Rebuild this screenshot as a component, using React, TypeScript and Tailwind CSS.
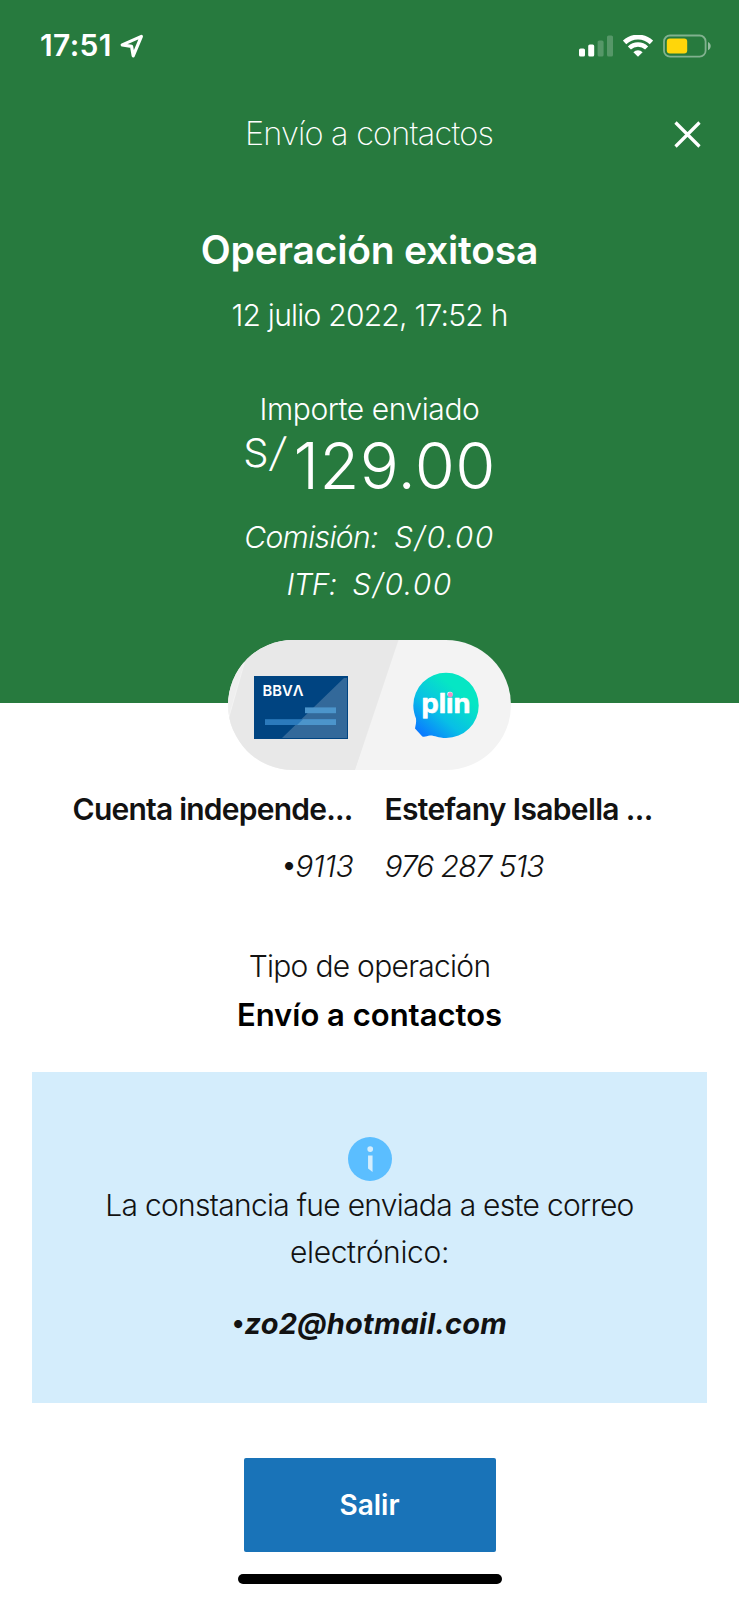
function StatusBar() {
  return (
    <div className="flex h-[91px] items-center justify-between pl-[40px] pr-[28px]">
      <div className="flex items-center gap-[8px]">
        <span className="text-[30px] font-semibold tracking-[0.35px]">17:51</span>
        <svg className="size-6" viewBox="0 0 24 24" fill="none" stroke="currentColor" strokeWidth="3.2" strokeLinejoin="round">
          <path d="M21.4 2.4L2.2 10.9L11.6 12.4L13.2 21.8Z" />
        </svg>
      </div>
      <div className="flex items-center">
        <svg className="h-[22px] w-[34px]" viewBox="0 0 34 22" fill="currentColor">
          <rect x="0" y="13.5" width="6" height="8" rx="1.6" />
          <rect x="9.2" y="9.5" width="6" height="12" rx="1.6" />
          <rect x="18.6" y="5.5" width="6" height="16" rx="1.6" opacity="0.22" />
          <rect x="28" y="0.5" width="6" height="21" rx="1.6" opacity="0.22" />
        </svg>
        <svg className="ml-[10px] h-[22px] w-[30px]" viewBox="0 0 30 22" fill="none" stroke="currentColor">
          <path d="M1.6 7.4A19.4 19.4 0 0 1 28.4 7.4" strokeWidth="4.8" />
          <path d="M6.4 13A12.4 12.4 0 0 1 23.6 13" strokeWidth="4.4" />
          <path d="M15 21.8L10.4 17.2A6.6 6.6 0 0 1 19.6 17.2Z" fill="currentColor" stroke="none" />
        </svg>
        <svg className="ml-[10px] h-6 w-12" viewBox="0 0 48 24" fill="none">
          <rect x="1" y="1.5" width="41.6" height="21.2" rx="6" stroke="#fff" strokeOpacity="0.42" strokeWidth="1.8" />
          <rect x="3.8" y="4.4" width="20.4" height="15.2" rx="3" fill="#ffd60a" />
          <path d="M45 8C48.6 9.4 48.6 14.8 45 16.2Z" fill="#fff" fillOpacity="0.5" />
        </svg>
      </div>
    </div>
  );
}

function TransferPill() {
  return (
    <svg className="relative mx-auto -mt-[63px] block h-[130px] w-[283px]" viewBox="0 0 283 130">
      <defs>
        <clipPath id="pill">
          <rect width="283" height="130" rx="65" />
        </clipPath>
        <linearGradient id="plin" x1="0.1" y1="0.9" x2="0.65" y2="0.25">
          <stop offset="0" stopColor="#0a7cff" />
          <stop offset="0.45" stopColor="#08bfe6" />
          <stop offset="1" stopColor="#06e6c4" />
        </linearGradient>
      </defs>
      <g clipPath="url(#pill)">
        <rect width="283" height="130" fill="#f3f3f3" />
        <path d="M19 15L28 0H170.5L127 130H28L0 82Z" fill="#e8e8e8" />
        <path d="M0 20H17L0 78Z" fill="#efefef" />
      </g>
      <g>
        <rect x="26" y="36" width="94" height="63" fill="#004481" />
        <path d="M116 38H119V98H54Z" fill="#fff" fillOpacity="0.2" />
        <rect x="77" y="67.4" width="31" height="5.8" fill="#4c95cb" />
        <rect x="37" y="79.2" width="71" height="5.8" fill="#2b7abc" />
        <path d="M75 79.2H108V85H69Z" fill="#4c95cb" />
        <text x="34.5" y="56" fill="#fff" fontFamily="Inter" fontSize="15" fontWeight="600" textLength="41" lengthAdjust="spacingAndGlyphs">
          BBV&Lambda;
        </text>
      </g>
      <g>
        <path
          d="M218 32.7A32.7 32.7 0 1 1 218 98.1C210 98.1 207 95.5 202 95.6C199 95.7 197 97.5 194.3 96.5L187 88.5C187.6 85 188.5 82.5 188 78.5C186.5 74.5 185.3 70 185.3 65.4A32.7 32.7 0 0 1 218 32.7Z"
          fill="url(#plin)"
        />
        <text x="193.5" y="73" fill="#fff" stroke="#fff" strokeWidth="0.6" strokeLinejoin="round" fontFamily="Inter" fontSize="27" fontWeight="700" textLength="49" lengthAdjust="spacingAndGlyphs">
          plin
        </text>
        <circle cx="222.3" cy="54.8" r="2.5" fill="#e992c8" />
      </g>
    </svg>
  );
}

export default function App() {
  return (
    <div className="h-[1600px] w-[739px] overflow-hidden bg-white font-['Inter',sans-serif] text-[30px] text-[#121212]">
      <header className="h-[703px] bg-[#277a3e] text-center font-light text-white">
        <StatusBar />
        <div className="grid h-[87px] grid-cols-[80px_1fr_80px] items-center">
          <span />
          <h1 className="-ml-px text-[32.5px] font-extralight tracking-[-0.8px]">Envío a contactos</h1>
          <svg className="ml-[15px] size-[27px]" viewBox="0 0 27 27" stroke="currentColor" strokeWidth="3.2" strokeLinecap="butt">
            <path d="M1.5 1.5L25.5 25.5M25.5 1.5L1.5 25.5" />
          </svg>
        </div>
        <h2 className="mt-12 text-[39px] leading-[48px] font-semibold tracking-[-0.2px]">Operación exitosa</h2>
        <p className="mt-[18px] leading-[46px] tracking-[-0.75px]">12 julio 2022, 17:52 h</p>
        <p className="mt-12 leading-[46px] tracking-[-0.43px]">Importe enviado</p>
        <div className="flex h-[68px] items-start justify-center gap-[7px]">
          <span className="text-[40px] leading-[42px] tracking-[2px]">
            S<span className="italic">/</span>
          </span>
          <span className="text-[65px] leading-[68px] tracking-[0.4px]">129.00</span>
        </div>
        <div className="mt-[14px] flex justify-center gap-[16px] leading-[47px] italic">
          <span className="tracking-[-0.6px]">Comisión:</span>
          <span className="tracking-[1.5px]">S/0.00</span>
        </div>
        <div className="flex justify-center gap-[16px] leading-[47px] italic">
          <span className="tracking-[-0.8px]">ITF:</span>
          <span className="tracking-[1.4px]">S/0.00</span>
        </div>
      </header>

      <TransferPill />

      <section className="mt-[19px] grid grid-cols-2 gap-x-[34px] gap-y-[17px] px-[31px] leading-10">
        <p className="text-right font-semibold tracking-[-0.78px]">Cuenta independe...</p>
        <p className="-ml-[2px] font-semibold tracking-[-0.65px]">Estefany Isabella ...</p>
        <p className="-mr-px flex items-center justify-end font-light tracking-[-0.4px] italic">
          <span className="mb-[2px] text-[26px] leading-8 font-semibold not-italic">•</span>
          9113
        </p>
        <p className="-ml-[2px] font-light tracking-[-1px] italic">976 287 513</p>
      </section>

      <section className="mt-[57px] text-center">
        <p className="leading-[47px] font-light tracking-[-0.72px]">Tipo de operación</p>
        <p className="text-[31px] leading-[50px] font-semibold text-black">Envío a contactos</p>
      </section>

      <section className="mx-8 mt-8 flex h-[331px] flex-col items-center bg-[#d4edfc] px-14 pt-[65px] text-center">
        <svg className="ml-px size-[44px]" viewBox="0 0 43 43">
          <circle cx="21.5" cy="21.5" r="21.5" fill="#5bbeff" />
          <circle cx="21.7" cy="11.8" r="2.8" fill="#d4edfc" />
          <path d="M19.6 18H24V34.2L19.6 30.8Z" fill="#d4edfc" />
        </svg>
        <p className="mt-px leading-[47px] font-light tracking-[-0.72px]">
          La constancia fue enviada a este correo
          <br />
          <span className="tracking-[-0.35px]">electrónico:</span>
        </p>
        <p className="mt-[24px] flex items-center text-[29px] leading-[47px] font-bold tracking-[0.2px] italic">
          <span className="mb-[2px] text-[26px] leading-8 not-italic">•</span>
          zo2@hotmail.com
        </p>
      </section>

      <button className="mx-auto mt-[55px] block h-[94px] w-[252px] rounded-[2px] bg-[#1973b8] text-[28px] font-semibold text-white">
        Salir
      </button>
      <div className="mx-auto mt-[22px] h-[10px] w-[264px] rounded-full bg-black" />
    </div>
  );
}
